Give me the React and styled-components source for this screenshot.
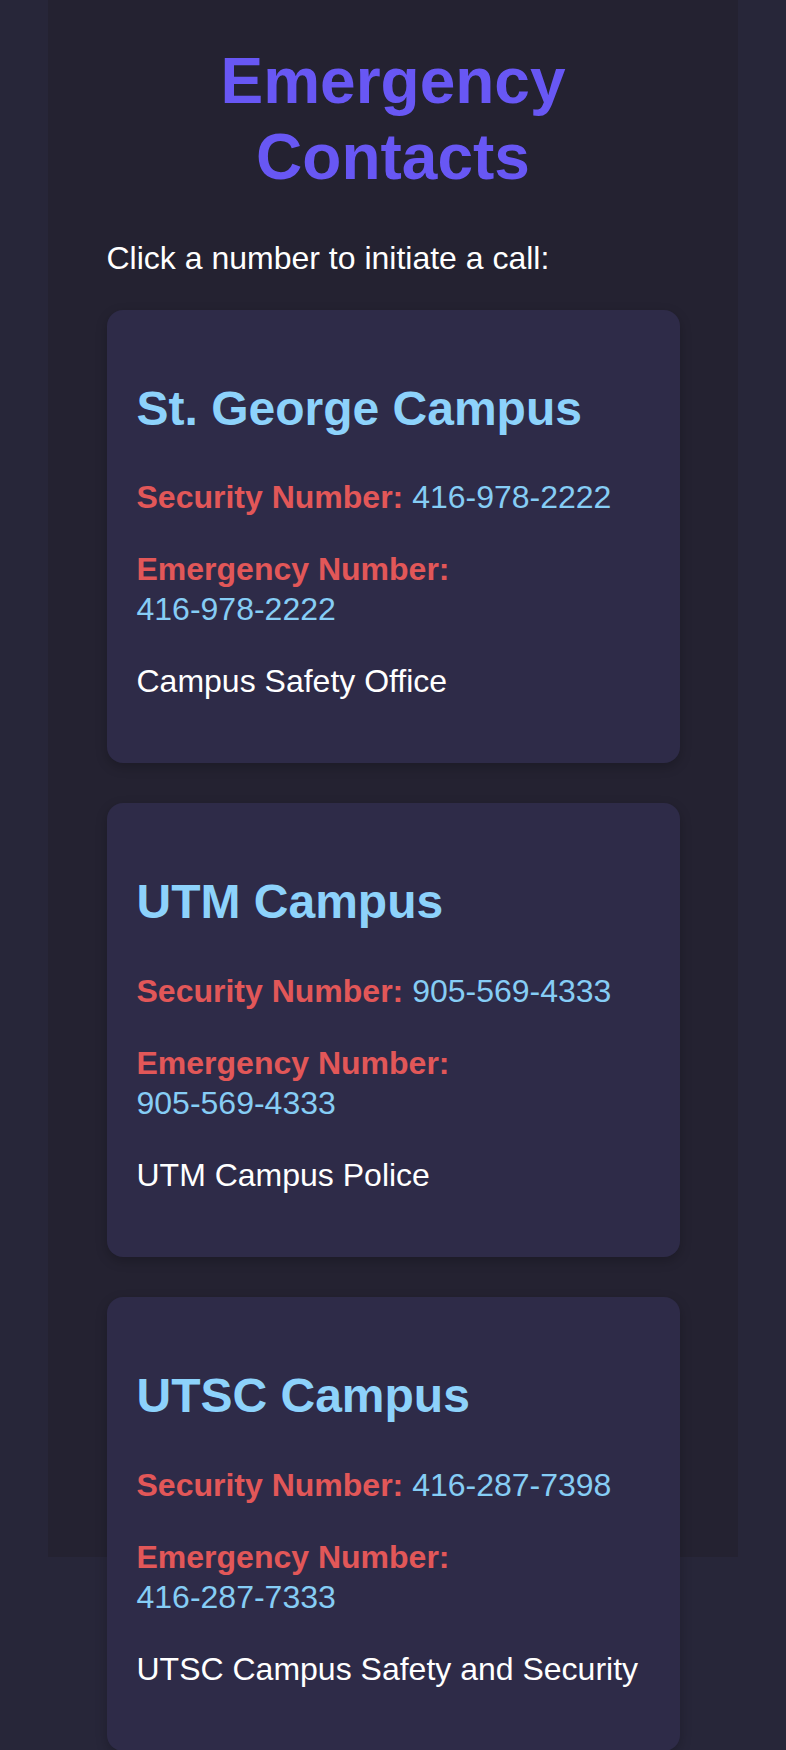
import React from "react";
import styled, { createGlobalStyle } from "styled-components";

const GlobalStyle = createGlobalStyle`
  html, body {
    margin: 0;
    padding: 0;
    background: #272639;
  }
  body {
    font-family: "Liberation Sans", Arial, Helvetica, sans-serif;
    color: #ffffff;
  }
`;

const Page = styled.main`
  display: flow-root;
  box-sizing: border-box;
  width: 690px;
  margin: 0 auto;
  padding: 0 58.5px;
  background: linear-gradient(
    to bottom,
    #242231 0,
    #242231 1557px,
    #272639 1557px,
    #272639 100%
  );
`;

const Title = styled.h1`
  margin: 0.67em 0;
  font-size: 64px;
  line-height: 76px;
  font-weight: 700;
  text-align: center;
  color: #6857f4;
`;

const Intro = styled.p`
  margin: 32px 0;
  font-size: 32px;
  line-height: 40px;
  color: #ffffff;
`;

const CardList = styled.section`
  display: flex;
  flex-direction: column;
  gap: 40px;
`;

const Card = styled.article`
  display: flow-root;
  padding: 30px;
  border-radius: 16px;
  background: #2e2b48;
  box-shadow: 0 4px 12px rgba(0, 0, 0, 0.22);
`;

const CampusName = styled.h2`
  margin: 40px 0;
  font-size: 48px;
  line-height: 1.2;
  font-weight: 700;
  color: #8dd2fb;
`;

const Line = styled.p`
  margin: 32px 0;
  font-size: 32px;
  line-height: 40px;
  color: #ffffff;
`;

const Label = styled.strong`
  font-weight: 700;
  color: #e25758;
`;

const Phone = styled.a`
  color: #86cdf5;
  text-decoration: none;
  white-space: nowrap;
`;

const campuses = [
  {
    name: "St. George Campus",
    security: "416-978-2222",
    emergency: "416-978-2222",
    office: "Campus Safety Office",
  },
  {
    name: "UTM Campus",
    security: "905-569-4333",
    emergency: "905-569-4333",
    office: "UTM Campus Police",
  },
  {
    name: "UTSC Campus",
    security: "416-287-7398",
    emergency: "416-287-7333",
    office: "UTSC Campus Safety and Security",
  },
];

export default function App() {
  return (
    <>
      <GlobalStyle />
      <Page>
        <Title>Emergency Contacts</Title>
        <Intro>Click a number to initiate a call:</Intro>
        <CardList>
          {campuses.map((c) => (
            <Card key={c.name}>
              <CampusName>{c.name}</CampusName>
              <Line>
                <Label>Security Number:</Label>{" "}
                <Phone href={`tel:${c.security}`}>{c.security}</Phone>
              </Line>
              <Line>
                <Label>Emergency Number:</Label>{" "}
                <Phone href={`tel:${c.emergency}`}>{c.emergency}</Phone>
              </Line>
              <Line>{c.office}</Line>
            </Card>
          ))}
        </CardList>
      </Page>
    </>
  );
}
